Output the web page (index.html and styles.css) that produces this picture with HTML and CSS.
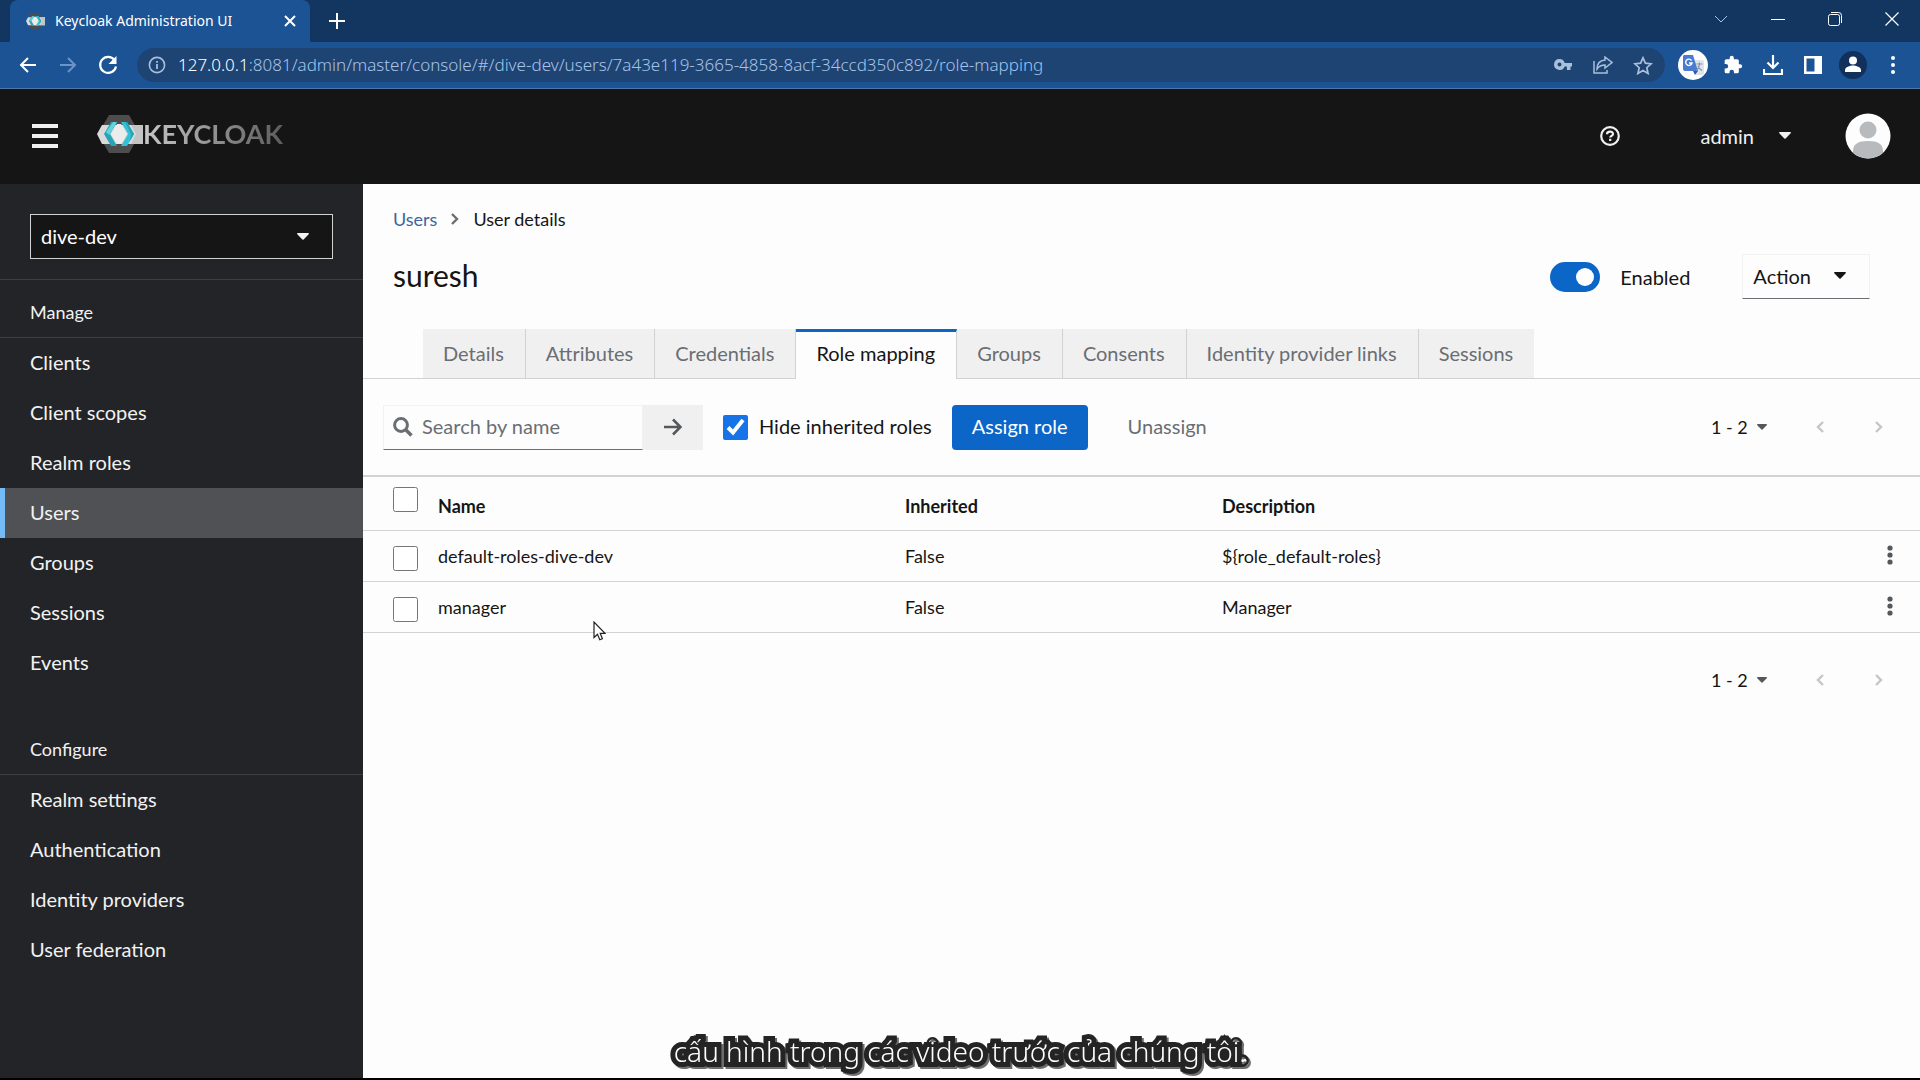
FILE: index.html
```html
<!DOCTYPE html>
<html lang="en">
<head>
<meta charset="utf-8">
<title>Keycloak Administration UI</title>
<link rel="stylesheet" href="styles.css">
</head>
<body>
<svg class="sprite" aria-hidden="true">
  <symbol id="caret" viewBox="0 0 12 7"><path d="M.8 0h10.4c.7 0 1 .8.5 1.3L6.6 6.6a.9.9 0 0 1-1.2 0L.3 1.3C-.2.8.1 0 .8 0z"/></symbol>
  <symbol id="angle-left" viewBox="0 0 8 12"><path d="M7 1 2 6l5 5" fill="none" stroke="currentColor" stroke-width="2.400"/></symbol>
  <symbol id="angle-right" viewBox="0 0 8 12"><path d="m1 1 5 5-5 5" fill="none" stroke="currentColor" stroke-width="2.400"/></symbol>
  <symbol id="kebab" viewBox="0 0 6 20"><circle cx="3" cy="3" r="2.6"/><circle cx="3" cy="10" r="2.6"/><circle cx="3" cy="17" r="2.6"/></symbol>
  <symbol id="mark" viewBox="0 0 46 38">
    <path d="M12 0h20l11 19-11 19H12L1 19z" fill="#4d4d4d"/>
    <path d="M5 10h41v19H5L0 19z" fill="#dadada"/>
    <path d="M34 10h12v19H34l5-10z" fill="#c4c4c4"/>
    <path d="M14 7h6l-7 12 7 12h-6L7 19z" fill="#27a5b8"/>
    <path d="M16 7h4l-8 13-3-3z" fill="#63d3de"/>
    <path d="M20 9h4l6 10-6 10h-4l-6-10z" fill="#ececec"/>
    <path d="M24 7h6l7 12-7 12h-6l7-12z" fill="#33c2d4"/>
    <path d="M30 7l7 12-4 7 1-7-6-12z" fill="#27a5b8"/>
  </symbol>
</svg>

<header class="browser">
  <div class="tabstrip">
    <div class="browser-tab">
      <svg class="favicon"><use href="#mark"/></svg>
      <span class="browser-title">Keycloak Administration UI</span>
      <button class="tab-close" aria-label="Close tab"><svg width="12" height="12" viewBox="0 0 12 12"><path d="m1 1 10 10M11 1 1 11" stroke="currentColor" stroke-width="2"/></svg></button>
    </div>
    <button class="new-tab" aria-label="New tab"><svg width="16" height="16" viewBox="0 0 16 16"><path d="M8 0v16M0 8h16" stroke="currentColor" stroke-width="2"/></svg></button>
    <div class="window-buttons">
      <button aria-label="Search tabs"><svg width="14" height="14" viewBox="0 0 14 14"><path d="m1 4 6 6 6-6" fill="none" stroke="#a9c6e8"/></svg></button>
      <button aria-label="Minimize"><svg width="14" height="14" viewBox="0 0 14 14"><path d="M0 7.5h14" stroke="currentColor"/></svg></button>
      <button aria-label="Restore"><svg width="14" height="14" viewBox="0 0 14 14"><rect x=".5" y="2.5" width="11" height="11" rx="2" fill="none" stroke="currentColor"/><path d="M3 .5h7.5a3 3 0 0 1 3 3V11" fill="none" stroke="currentColor"/></svg></button>
      <button aria-label="Close"><svg width="14" height="14" viewBox="0 0 14 14"><path d="m.5.5 13 13m0-13-13 13" stroke="currentColor" stroke-width="1.2"/></svg></button>
    </div>
  </div>
  <div class="browser-bar">
    <button aria-label="Back"><svg width="18" height="18" viewBox="0 0 18 18"><path d="M17 9H2M9 2 2 9l7 7" fill="none" stroke="currentColor" stroke-width="2"/></svg></button>
    <button class="dim" aria-label="Forward"><svg width="18" height="18" viewBox="0 0 18 18"><path d="M1 9h15M9 2l7 7-7 7" fill="none" stroke="currentColor" stroke-width="2"/></svg></button>
    <button aria-label="Reload"><svg width="20" height="20" viewBox="0 0 20 20"><path d="M16.5 5A8 8 0 1 0 18 11.500" fill="none" stroke="currentColor" stroke-width="2.200"/><path d="M18.500 1v8h-8z" fill="currentColor"/></svg></button>
    <div class="omnibox">
      <svg class="info" width="18" height="18" viewBox="0 0 18 18"><circle cx="9" cy="9" r="7.600" fill="none" stroke="currentColor" stroke-width="1.600"/><path d="M9 8v5M9 5v1.800" stroke="currentColor" stroke-width="1.800"/></svg>
      <span class="url"><b>127.0.0.1</b>:8081/admin/master/console/#/dive-dev/users/7a43e119-3665-4858-8acf-34ccd350c892/role-mapping</span>
      <button aria-label="Passwords"><svg width="18" height="12" viewBox="0 0 18 12"><path fill-rule="evenodd" d="M5.500 0a5.500 5.500 0 0 1 5.200 4H18v3.500h-1.500V11h-3.600V7.500h-2.200A5.500 5.500 0 1 1 5.500 0zm0 3.600a2 2 0 1 0 0 4 2 2 0 0 0 0-4z" fill="currentColor"/></svg></button>
      <button aria-label="Share"><svg width="20" height="18" viewBox="0 0 20 18"><path d="M1 5v12h13v-3M12 1l7 5.500L12 12V9c-4 0-6 1-8 4 0-5 3-8.500 8-9z" fill="none" stroke="currentColor" stroke-width="1.500"/></svg></button>
      <button aria-label="Bookmark"><svg width="20" height="19" viewBox="0 0 20 19"><path d="m10 1.800 2.400 5.400 5.800.6-4.400 3.900 1.300 5.800L10 14.500l-5.100 3 1.300-5.800L1.800 7.800l5.800-.6z" fill="none" stroke="currentColor" stroke-width="1.700"/></svg></button>
    </div>
    <button aria-label="Translate"><svg width="30" height="30" viewBox="0 0 30 30"><circle cx="15" cy="15" r="15" fill="#fff"/><path d="M16 10h8a2 2 0 0 1 2 2v11a2 2 0 0 1-2 2h-6z" fill="#dfe3ea"/><path d="M6 5h9l5 16H7a2 2 0 0 1-2-2V6z" fill="#4a7bd0"/><path d="m15 21 5 0-3 4z" fill="#3058a8"/><path d="M13.500 10.500A3.200 3.200 0 1 0 14 13h-3" fill="none" stroke="#fff" stroke-width="1.400"/><path d="M18.500 14h6M21.500 12.500V14c0 2-1.500 5-3 6.500M20 16c.8 2 2 3.500 4 4.500" fill="none" stroke="#8892a4" stroke-width="1.200"/></svg></button>
    <button aria-label="Extensions"><svg width="20" height="20" viewBox="0 0 24 24"><path fill="currentColor" d="M20.500 11H19V7a2 2 0 0 0-2-2h-4V3.500a2.500 2.500 0 0 0-5 0V5H4a2 2 0 0 0-2 2v3.800h1.500a2.700 2.700 0 0 1 0 5.400H2V20a2 2 0 0 0 2 2h3.800v-1.500a2.700 2.700 0 0 1 5.400 0V22H17a2 2 0 0 0 2-2v-4h1.500a2.500 2.500 0 0 0 0-5z"/></svg></button>
    <button aria-label="Downloads"><svg width="20" height="20" viewBox="0 0 20 20"><path d="M10 0v12M4.500 7.500 10 13l5.500-5.500M1 14v5h18v-5" fill="none" stroke="currentColor" stroke-width="2.200"/></svg></button>
    <button aria-label="Side panel"><svg width="18" height="18" viewBox="0 0 18 18"><path fill="currentColor" fill-rule="evenodd" d="M0 0h18v18H0zm2.500 2.500v13h8v-13z"/></svg></button>
    <button aria-label="Profile"><svg width="28" height="28" viewBox="0 0 28 28"><circle cx="14" cy="14" r="14" fill="#12305c"/><circle cx="14" cy="9.500" r="4" fill="#fff"/><path d="M6 21v-2c0-3 5-4.500 8-4.500s8 1.500 8 4.500v2z" fill="#fff"/></svg></button>
    <button aria-label="Browser menu"><svg width="4" height="18" viewBox="0 0 4 18"><circle cx="2" cy="2" r="2" fill="currentColor"/><circle cx="2" cy="9" r="2" fill="currentColor"/><circle cx="2" cy="16" r="2" fill="currentColor"/></svg></button>
  </div>
</header>

<div class="masthead">
  <button class="burger" aria-label="Global navigation"><svg width="26" height="24" viewBox="0 0 26 24"><path d="M0 2h26M0 12h26M0 22h26" stroke="currentColor" stroke-width="4"/></svg></button>
  <a class="brand" href="#"><svg class="brand-mark"><use href="#mark"/></svg><span class="brand-name">KEYCLOAK</span></a>
  <button class="help" aria-label="Help"><svg width="20" height="20" viewBox="0 0 20 20"><circle cx="10" cy="10" r="8.800" fill="none" stroke="currentColor" stroke-width="2.200"/><path d="M7 8.200c0-3.400 6-3.400 6-.3 0 1.900-2.800 1.900-2.800 3.600M10.200 12.800v2.200" fill="none" stroke="currentColor" stroke-width="2.200"/></svg></button>
  <button class="account">admin <svg class="caret"><use href="#caret"/></svg></button>
  <svg class="avatar" viewBox="0 0 46 46" role="img" aria-label="Avatar"><clipPath id="round"><circle cx="23" cy="23" r="22.500"/></clipPath><g clip-path="url(#round)"><path d="M0 0h46v46H0z" fill="#fdfdfd"/><circle cx="23" cy="17" r="8.500" fill="#b8bbbe"/><path d="M8 46V38c0-7 5-10 15-10s15 3 15 10v8z" fill="#b8bbbe"/></g></svg>
</div>

<div class="page">
  <aside class="sidebar">
    <div class="realm">
      <select class="realm-select" aria-label="Realm"><option>dive-dev</option></select>
      <svg class="caret realm-caret"><use href="#caret"/></svg>
    </div>
    <nav>
      <h2 class="nav-title">Manage</h2>
      <a class="nav-link" href="#">Clients</a>
      <a class="nav-link" href="#">Client scopes</a>
      <a class="nav-link" href="#">Realm roles</a>
      <a class="nav-link current" href="#" aria-current="page">Users</a>
      <a class="nav-link" href="#">Groups</a>
      <a class="nav-link" href="#">Sessions</a>
      <a class="nav-link" href="#">Events</a>
    </nav>
    <nav class="nav-second">
      <h2 class="nav-title">Configure</h2>
      <a class="nav-link" href="#">Realm settings</a>
      <a class="nav-link" href="#">Authentication</a>
      <a class="nav-link" href="#">Identity providers</a>
      <a class="nav-link" href="#">User federation</a>
    </nav>
  </aside>

  <main class="main">
    <div class="crumbs"><a href="#">Users</a><svg class="angle crumb-angle"><use href="#angle-right"/></svg><span>User details</span></div>
    <div class="title-row">
      <h1>suresh</h1>
      <label class="enabled"><input class="switch" type="checkbox" role="switch" checked>Enabled</label>
      <button class="action">Action <svg class="caret"><use href="#caret"/></svg></button>
    </div>
    <div class="tabs" role="tablist">
      <button class="tab" role="tab">Details</button>
      <button class="tab" role="tab">Attributes</button>
      <button class="tab" role="tab">Credentials</button>
      <button class="tab active" role="tab" aria-selected="true">Role mapping</button>
      <button class="tab" role="tab">Groups</button>
      <button class="tab" role="tab">Consents</button>
      <button class="tab" role="tab">Identity provider links</button>
      <button class="tab" role="tab">Sessions</button>
    </div>
    <div class="toolbar">
      <div class="search">
        <label class="search-field"><svg width="20" height="20" viewBox="0 0 20 20"><circle cx="8" cy="8" r="6.400" fill="none" stroke="currentColor" stroke-width="3"/><path d="m12.500 12.500 6 6" stroke="currentColor" stroke-width="3.600"/></svg><input type="text" placeholder="Search by name" aria-label="Search by name"></label>
        <button class="search-go" aria-label="Search"><svg width="18" height="18" viewBox="0 0 18 18"><path d="M0 9h16M9 1.500 16.500 9 9 16.500" fill="none" stroke="currentColor" stroke-width="2.600"/></svg></button>
      </div>
      <label class="hide"><input class="box" type="checkbox" checked><span>Hide inherited roles</span></label>
      <button class="assign">Assign role</button>
      <button class="unassign" disabled>Unassign</button>
      <div class="pager">
        <button class="range">1 - 2 <svg class="caret small"><use href="#caret"/></svg></button>
        <button class="step" aria-label="Previous page" disabled><svg class="angle"><use href="#angle-left"/></svg></button>
        <button class="step" aria-label="Next page" disabled><svg class="angle"><use href="#angle-right"/></svg></button>
      </div>
    </div>
    <table class="roles">
      <thead>
        <tr><th class="col-check"><input class="box" type="checkbox" aria-label="Select all rows"></th><th class="col-name">Name</th><th class="col-inherited">Inherited</th><th>Description</th><th class="col-menu"></th></tr>
      </thead>
      <tbody>
        <tr><td class="col-check"><input class="box" type="checkbox" aria-label="Select default-roles-dive-dev"></td><td>default-roles-dive-dev</td><td>False</td><td>${role_default-roles}</td><td class="col-menu"><button aria-label="Actions"><svg class="kebab"><use href="#kebab"/></svg></button></td></tr>
        <tr><td class="col-check"><input class="box" type="checkbox" aria-label="Select manager"></td><td>manager</td><td>False</td><td>Manager</td><td class="col-menu"><button aria-label="Actions"><svg class="kebab"><use href="#kebab"/></svg></button></td></tr>
      </tbody>
    </table>
    <div class="footer">
      <div class="pager">
        <button class="range">1 - 2 <svg class="caret small"><use href="#caret"/></svg></button>
        <button class="step" aria-label="Previous page" disabled><svg class="angle"><use href="#angle-left"/></svg></button>
        <button class="step" aria-label="Next page" disabled><svg class="angle"><use href="#angle-right"/></svg></button>
      </div>
    </div>
  </main>
</div>

<svg class="pointer" viewBox="0 0 13 20" aria-hidden="true"><path d="M1 1v15.500l3.500-3.300 2.300 5.600 2.600-1.100L7.200 12.300H12z" fill="#fff" stroke="#222" stroke-width="1.200"/></svg>
<p class="caption" lang="vi">cấu hình trong các video trước của chúng tôi.</p>
</body>
</html>
```
FILE: styles.css
```css
* { box-sizing: border-box; }

body {
  position: relative;
  display: flex;
  flex-direction: column;
  min-height: 100vh;
  margin: 0;
  border-bottom: 2px solid #000;
  background: #fdfdfd;
  color: #151515;
  font: 20px/30px Lato, "Open Sans", sans-serif;
}

button {
  display: flex;
  align-items: center;
  justify-content: center;
  padding: 0;
  border: 0;
  background: none;
  color: inherit;
  font: inherit;
}

a { color: inherit; text-decoration: none; }
h1, h2, p { margin: 0; font-weight: 400; }

.sprite { position: absolute; width: 0; height: 0; }
.caret { width: 12px; height: 7px; fill: currentColor; }
.caret.small { width: 10px; height: 6px; color: #55585b; }
.angle { width: 8px; height: 12px; }
.kebab { width: 6px; height: 20px; fill: #55585b; }

/* Browser window */
.browser {
  background: #1c5394;
  border-bottom: 1px solid #4f76a8;
  color: #fff;
  font-family: "Noto Sans", sans-serif;
}
.tabstrip { display: flex; height: 42px; padding-left: 10px; background: #12365f; }
.browser-tab {
  display: flex;
  align-items: center;
  width: 300px;
  padding: 0 14px 0 16px;
  border-radius: 8px 8px 0 0;
  background: #1c5394;
}
.favicon { width: 19px; height: 16px; }
.browser-title { flex: 1; padding-left: 10px; font-size: 14px; }
.new-tab { width: 54px; }
.window-buttons { display: flex; height: 38px; margin-left: auto; }
.window-buttons button { width: 57px; }
.browser-bar { display: flex; align-items: center; height: 46px; padding: 0 7px 0 8px; }
.browser-bar button { width: 40px; height: 34px; flex: none; }
.browser-bar .dim { color: #6b94c8; }
.omnibox {
  display: flex;
  flex: 1;
  align-items: center;
  min-width: 0;
  height: 34px;
  margin: 0 8px 0 9px;
  padding: 0 2px 0 11px;
  border-radius: 17px;
  background: #1e4474;
  color: #a9bfdc;
}
.info { flex: none; }
.url {
  flex: 1;
  overflow: hidden;
  padding-left: 12px;
  color: #a6c3e8;
  font-size: 17px;
  font-weight: 300;
  white-space: nowrap;
}
.url b { color: #fff; font-weight: 300; }

/* Masthead */
.masthead {
  display: flex;
  align-items: center;
  height: 95px;
  padding: 0 29px 2px 32px;
  background: #151515;
  color: #f0f0f0;
}
.burger { width: 26px; height: 24px; }
.brand { display: flex; align-items: center; margin-left: 39px; padding-bottom: 3px; }
.brand-mark { width: 46px; height: 38px; }
.brand-name {
  background: linear-gradient(90deg, #c8c8c8, #5c5c5c);
  background-clip: text;
  color: transparent;
  font-size: 27px;
  font-weight: 700;
}
.help { margin-left: auto; }
.account { gap: 25px; margin: 0 54px 0 80px; }
.avatar { width: 46px; height: 46px; }

/* Sidebar */
.page { display: flex; flex: 1; }
.sidebar { width: 363px; flex: none; background: #232427; color: #f2f2f2; }
.realm { position: relative; padding: 30px 30px 20px; border-bottom: 1px solid #3c3f42; }
.realm-select {
  display: block;
  width: 100%;
  height: 45px;
  padding: 0 10px 2px;
  border: 1px solid #d2d2d2;
  border-radius: 0;
  appearance: none;
  background: #151515;
  color: #fff;
  font: inherit;
}
.realm-caret { position: absolute; top: 49px; right: 54px; }
.nav-title {
  padding: 18px 30px 10px;
  border-bottom: 1px solid #3c3f42;
  font-size: 18px;
  line-height: 29px;
}
.nav-link { display: block; padding: 9px 30px 11px; }
.current { padding-left: 25px; border-left: 5px solid #73bcf7; background: #505154; }
.nav-second { margin-top: 29px; }

/* Main area */
.main { flex: 1; min-width: 0; }
.crumbs {
  display: flex;
  align-items: center;
  gap: 14px;
  padding: 20px 30px 0;
  font-size: 18px;
}
.crumbs a { color: #3f659c; }
.crumb-angle { color: #6a6e73; }
.title-row { display: flex; align-items: center; padding: 20px 50px 30px 30px; }
h1 { flex: 1; padding-bottom: 2px; font-size: 30px; line-height: 43px; }
.enabled { display: flex; align-items: center; gap: 20px; }
.switch {
  width: 50px;
  height: 30px;
  margin: 0;
  padding: 6px;
  border-radius: 15px;
  appearance: none;
  background: #8a8d90;
}
.switch::before { display: block; width: 18px; height: 18px; border-radius: 50%; background: #fff; content: ""; }
.switch:checked { background: #0b66c8; }
.switch:checked::before { margin-left: auto; }
.action {
  gap: 23px;
  height: 45px;
  margin-left: 52px;
  padding: 0 23px 2px 10px;
  border: 1px solid #f2f2f2;
  border-bottom-color: #6a6e73;
}
.tabs { display: flex; height: 50px; padding-left: 60px; border-bottom: 1px solid #d2d2d2; }
.tab { height: 49px; padding: 0 21px 2px 20px; border-right: 1px solid #d2d2d2; background: #f0f0f0; color: #6a6e73; }
.tab:last-child { border-right: 0; }
.tab.active {
  height: 50px;
  border-top: 3px solid #0b66c8;
  padding-bottom: 6px;
  background: #fdfdfd;
  color: #151515;
}
.toolbar { display: flex; align-items: center; height: 96px; padding: 0 31px 0 20px; }
.search { display: flex; width: 320px; height: 45px; }
.search-field {
  display: flex;
  flex: 1;
  align-items: center;
  gap: 9px;
  padding-left: 9px;
  border: 1px solid #f2f2f2;
  border-bottom-color: #6a6e73;
  color: #6a6e73;
}
.search-field input { width: 200px; padding: 0 0 2px; border: 0; background: none; font: inherit; }
.search-field input::placeholder { color: #6a6e73; }
.search-go { width: 60px; background: #f0f0f0; color: #55585b; }
.box { width: 25px; height: 25px; margin: 0; accent-color: #1673e8; }
.hide { display: flex; align-items: center; gap: 11px; margin-left: 20px; }
.hide span { padding-bottom: 2px; }
.assign { height: 45px; margin-left: 20px; padding: 0 20px 2px; border-radius: 4px; background: #0b66c8; color: #fff; }
.unassign { margin-left: 40px; padding-bottom: 2px; color: #6a6e73; }
.pager { display: flex; align-items: center; margin-left: auto; font-size: 18px; }
.range { justify-content: flex-start; gap: 9px; width: 56px; }
.step { width: 20px; height: 30px; margin-left: 43px; color: #c4c7ca; }
.step + .step { margin-left: 39px; }

.roles { width: 100%; border-collapse: collapse; border-top: 2px solid #d2d2d2; font-size: 18px; line-height: 24px; }
.roles th, .roles td { padding: 13px 0 12px; border-bottom: 1px solid #d2d2d2; text-align: left; vertical-align: top; }
.roles th { padding: 17px 0 12px; font-weight: 700; }
.roles .col-check { width: 75px; padding: 15px 0 10px 30px; }
.roles th.col-check { padding-top: 10px; }
.roles .box { display: block; }
.col-name { width: 467px; }
.col-inherited { width: 317px; }
.roles .col-menu { width: 60px; }
.col-menu button { width: 60px; height: 22px; }
.footer { display: flex; padding: 32px 31px 0; }

/* Layers above the page */
.pointer { position: absolute; top: 621px; left: 593px; width: 13px; height: 20px; }
.caption {
  position: absolute;
  right: 0;
  bottom: 7px;
  left: 0;
  color: #fff;
  font: 300 28px/40px "Noto Sans", sans-serif;
  text-align: center;
  -webkit-text-stroke: 10px #242424;
  paint-order: stroke fill;
  filter: drop-shadow(2px 2px 0 #6e6e6e);
}
```
